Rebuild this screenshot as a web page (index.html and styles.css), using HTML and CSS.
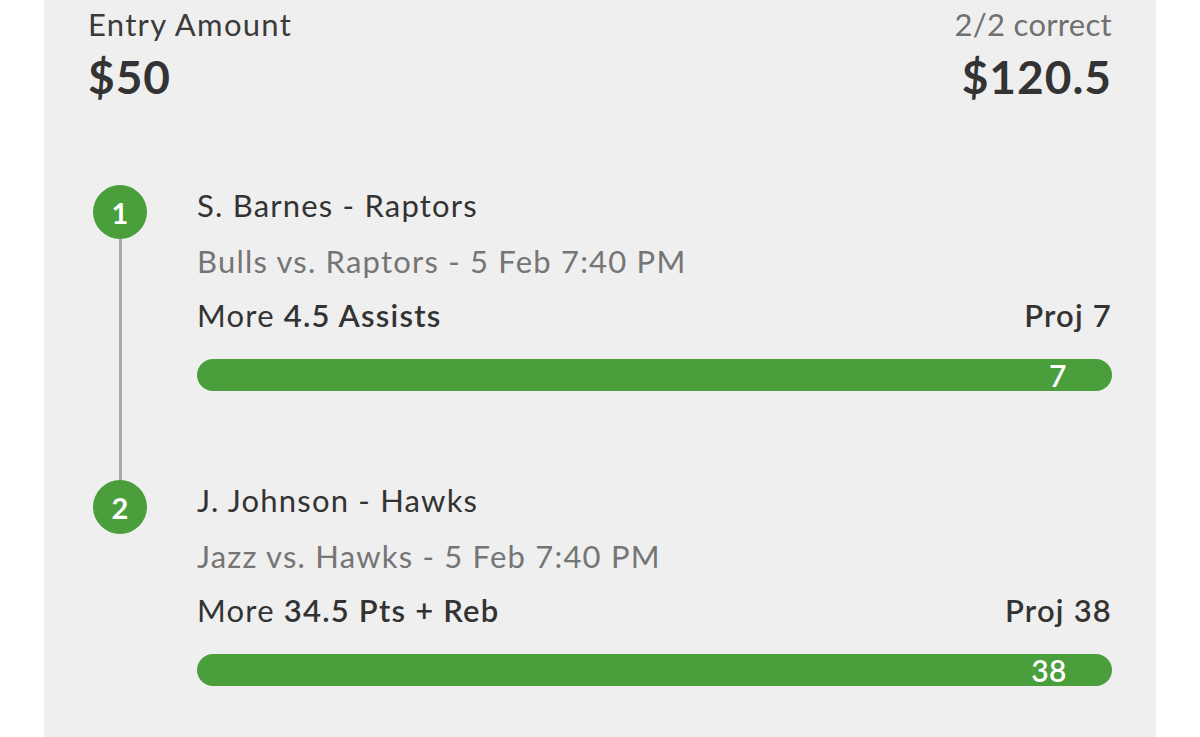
FILE: index.html
```html
<!DOCTYPE html>
<html>
<head>
<meta charset="utf-8">
<link rel="stylesheet" href="styles.css">
</head>
<body>
<div class="panel">
  <div class="header">
    <div class="hcol">
      <div class="label wide">Entry Amount</div>
      <div class="amount">$50</div>
    </div>
    <div class="hcol right">
      <div class="label muted">2/2 correct</div>
      <div class="amount">$120.5</div>
    </div>
  </div>
  <div class="picks">
    <div class="pick">
      <div class="rail">
        <div class="dot">1</div>
        <div class="line"></div>
      </div>
      <div class="body">
        <div class="name">S. Barnes - Raptors</div>
        <div class="game">Bulls vs. Raptors - 5 Feb 7:40 PM</div>
        <div class="stat">
          <span>More <b>4.5 Assists</b></span>
          <b>Proj 7</b>
        </div>
        <div class="bar"><span>7</span></div>
      </div>
    </div>
    <div class="pick">
      <div class="rail">
        <div class="dot">2</div>
      </div>
      <div class="body">
        <div class="name">J. Johnson - Hawks</div>
        <div class="game">Jazz vs. Hawks - 5 Feb 7:40 PM</div>
        <div class="stat">
          <span>More <b>34.5 Pts + Reb</b></span>
          <b>Proj 38</b>
        </div>
        <div class="bar"><span>38</span></div>
      </div>
    </div>
  </div>
</div>
</body>
</html>
```
FILE: styles.css
```css
html, body {
  margin: 0;
  padding: 0;
  background: #ffffff;
}
body {
  font-family: "Lato", "Open Sans", sans-serif;
  color: #333333;
}
.panel {
  margin: 0 44px;
  height: 737px;
  background: #efefef;
  padding: 0 44px;
  box-sizing: border-box;
  overflow: hidden;
}
.header {
  display: flex;
  justify-content: space-between;
  padding-top: 4px;
}
.hcol {
  display: flex;
  flex-direction: column;
}
.hcol.right {
  align-items: flex-end;
}
.label {
  font-size: 31px;
  line-height: 40px;
  letter-spacing: 0.3px;
  color: #3a3a3a;
}
.label.wide {
  letter-spacing: 1.3px;
}
.label.muted {
  color: #707070;
}
.amount {
  margin-top: 5px;
  font-size: 46px;
  line-height: 56px;
  font-weight: 700;
  letter-spacing: 1px;
  color: #333333;
}
.picks {
  margin-top: 75px;
}
.pick {
  display: flex;
  height: 295px;
}
.rail {
  width: 109px;
  flex: none;
  display: flex;
  flex-direction: column;
  align-items: center;
  padding-left: 5px;
  padding-right: 50px;
  box-sizing: border-box;
}
.dot {
  margin-top: 5px;
  width: 54px;
  height: 54px;
  border-radius: 50%;
  background: #4a9e3c;
  color: #ffffff;
  font-weight: 700;
  font-size: 29px;
  display: flex;
  align-items: center;
  justify-content: center;
  flex: none;
}
.line {
  flex: 1;
  width: 3px;
  background: #ababab;
  margin-bottom: -6px;
}
.body {
  flex: 1;
  display: flex;
  flex-direction: column;
}
.name, .game, .stat {
  font-size: 31px;
  line-height: 54px;
  letter-spacing: 1.2px;
}
.name {
  color: #333333;
  margin-top: -2px;
  margin-bottom: 2px;
}
.game {
  color: #757575;
}
.stat {
  display: flex;
  justify-content: space-between;
  color: #333333;
}
.stat b {
  font-weight: 600;
}
.bar {
  margin-top: 17px;
  height: 32px;
  border-radius: 16px;
  background: #4a9e3c;
  display: flex;
  justify-content: flex-end;
  align-items: center;
  padding-right: 45px;
  color: #ffffff;
  font-size: 30px;
  font-weight: 600;
  line-height: 32px;
  letter-spacing: 0.5px;
}
```
